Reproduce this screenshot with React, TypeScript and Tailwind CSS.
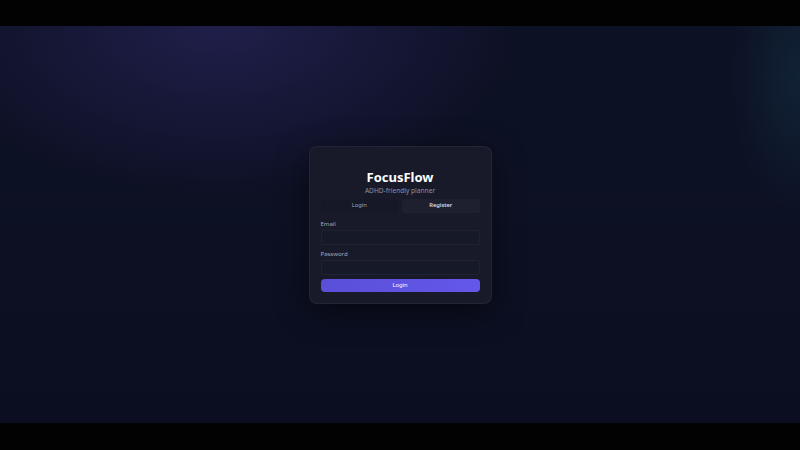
import React from "react";

export default function App() {
  return (
    <div className="w-[800px] h-[450px] flex flex-col bg-black overflow-hidden" style={{ fontFamily: '"Noto Sans", "Open Sans", sans-serif' }}>
      <div className="h-[26px] shrink-0 bg-[#020203]" />
      <div className="relative flex-1 flex items-center justify-center bg-[#0d1124] overflow-hidden">
        <div className="absolute inset-0 bg-[radial-gradient(ellipse_300px_170px_at_220px_0px,rgba(44,40,100,0.6),transparent)]" />
        <div className="absolute inset-0 bg-[radial-gradient(ellipse_70px_140px_at_800px_50px,rgba(20,46,66,0.6),transparent)]" />
        <div className="absolute inset-0 bg-[linear-gradient(to_bottom,transparent_40%,rgba(8,10,28,0.4))]" />
        <div className="relative w-[183px] rounded-[8px] border border-white/[0.05] bg-[#181a29] shadow-[0_8px_30px_rgba(0,0,0,0.5)] px-[11px] pt-[21px] pb-[11px] flex flex-col">
          <div className="text-center text-white font-bold text-[13px] leading-[18px]">FocusFlow</div>
          <div className="text-center text-[#8c90a9] text-[6.6px] leading-[10px]">ADHD-friendly planner</div>
          <div className="mt-[3px] grid grid-cols-2 gap-[4px]">
            <div className="h-[14px] rounded-[3px] bg-[#161827] flex items-center justify-center text-[5.8px] text-[#a2a5b8]">Login</div>
            <div className="h-[14px] rounded-[3px] bg-[#1e2030] flex items-center justify-center text-[5.8px] text-[#e6e7ee] font-medium">Register</div>
          </div>
          <div className="mt-[6px] text-[6px] leading-[10px] text-[#a3a7bb]">Email</div>
          <div className="mt-[1px] h-[15px] rounded-[3px] bg-[#161928] border border-white/[0.04]" />
          <div className="mt-[4px] text-[6px] leading-[10px] text-[#a3a7bb]">Password</div>
          <div className="mt-[1px] h-[15px] rounded-[3px] bg-[#161928] border border-white/[0.04]" />
          <div className="mt-[4px] h-[13px] rounded-[4px] bg-[linear-gradient(to_right,#5a4fd8,#6457ea)] flex items-center justify-center text-[5.8px] text-white">Login</div>
        </div>
      </div>
      <div className="h-[27px] shrink-0 bg-[#020203]" />
    </div>
  );
}
